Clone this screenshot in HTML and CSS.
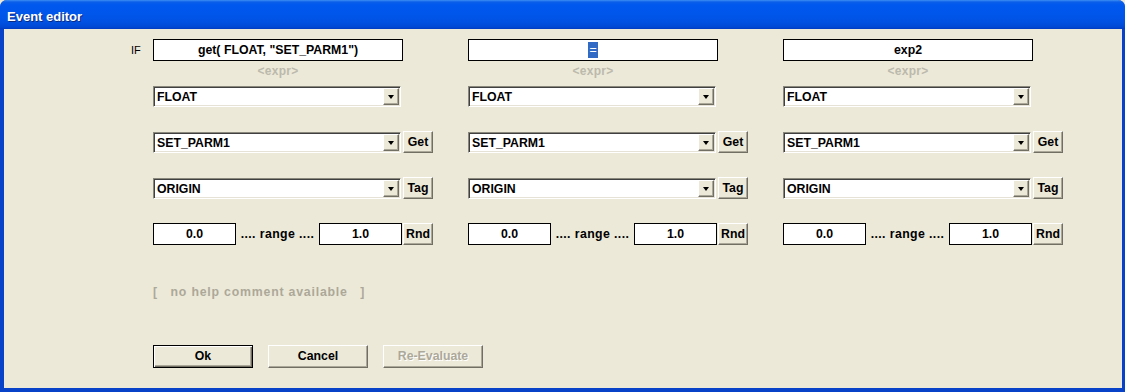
FILE: index.html
```html
<!DOCTYPE html>
<html>
<head>
<meta charset="utf-8">
<link rel="stylesheet" href="styles.css">
</head>
<body>
<div class="window">
  <div class="titlebar"><span class="title">Event editor</span></div>
  <div class="client">
    <div class="grid">
      <div class="gutter"><span class="if">IF</span></div>

      <div class="col">
        <div class="expr">get( FLOAT, "SET_PARM1")</div>
        <div class="hint">&lt;expr&gt;</div>
        <div class="row r1"><div class="combo">FLOAT<span class="arrow"><i></i></span></div></div>
        <div class="row r2"><div class="combo">SET_PARM1<span class="arrow"><i></i></span></div><div class="btn">Get</div></div>
        <div class="row r2"><div class="combo">ORIGIN<span class="arrow"><i></i></span></div><div class="btn">Tag</div></div>
        <div class="row r3"><div class="num">0.0</div><div class="range">.... range ....</div><div class="num">1.0</div><div class="btn rnd">Rnd</div></div>
      </div>

      <div class="col">
        <div class="expr"><span class="sel">=</span></div>
        <div class="hint">&lt;expr&gt;</div>
        <div class="row r1"><div class="combo">FLOAT<span class="arrow"><i></i></span></div></div>
        <div class="row r2"><div class="combo">SET_PARM1<span class="arrow"><i></i></span></div><div class="btn">Get</div></div>
        <div class="row r2"><div class="combo">ORIGIN<span class="arrow"><i></i></span></div><div class="btn">Tag</div></div>
        <div class="row r3"><div class="num">0.0</div><div class="range">.... range ....</div><div class="num">1.0</div><div class="btn rnd">Rnd</div></div>
      </div>

      <div class="col">
        <div class="expr">exp2</div>
        <div class="hint">&lt;expr&gt;</div>
        <div class="row r1"><div class="combo">FLOAT<span class="arrow"><i></i></span></div></div>
        <div class="row r2"><div class="combo">SET_PARM1<span class="arrow"><i></i></span></div><div class="btn">Get</div></div>
        <div class="row r2"><div class="combo">ORIGIN<span class="arrow"><i></i></span></div><div class="btn">Tag</div></div>
        <div class="row r3"><div class="num">0.0</div><div class="range">.... range ....</div><div class="num">1.0</div><div class="btn rnd">Rnd</div></div>
      </div>
    </div>

    <div class="help">[&nbsp;&nbsp; no help comment available &nbsp;&nbsp;]</div>

    <div class="actions">
      <div class="pbtn default">Ok</div>
      <div class="pbtn">Cancel</div>
      <div class="pbtn disabled">Re-Evaluate</div>
    </div>
  </div>
</div>
</body>
</html>
```

FILE: styles.css
```css
* { box-sizing: border-box; }
html, body { margin: 0; padding: 0; }
body {
  width: 1125px;
  height: 392px;
  overflow: hidden;
  background: #ece9d8;
  font-family: "Liberation Sans", Arial, sans-serif;
  font-weight: bold;
  font-size: 12.3px;
  color: #000;
}
.window {
  width: 1125px;
  height: 392px;
  display: flex;
  flex-direction: column;
  background: #0842c8;
  border-radius: 7px 7px 0 0;
  overflow: hidden;
}
.titlebar {
  height: 29px;
  flex: none;
  background: linear-gradient(to bottom, #3d8ff5 0px, #0a5ee8 2px, #0058ee 5px, #0056eb 14px, #0051e2 22px, #0048d4 27px, #003cc0 29px);
  display: flex;
  align-items: center;
  padding-left: 7px;
  padding-top: 3px;
}
.title {
  color: #fff;
  font-family: "Liberation Sans", Arial, sans-serif;
  font-weight: bold;
  font-size: 13px;
  text-shadow: 1px 1px 0 #0a2a80;
}
.client {
  flex: 1;
  margin: 0 3px 4px 4px;
  background: #ece9d8;
  display: flex;
  flex-direction: column;
}
.grid {
  display: grid;
  grid-template-columns: 149px 315px 315px 1fr;
  padding-top: 10px;
}
.gutter { padding-left: 127px; }
.if {
  display: block;
  height: 22px;
  line-height: 22px;
  font-weight: normal;
  font-size: 11px;
  color: #000;
}
.col { display: flex; flex-direction: column; }
.expr {
  width: 250px;
  height: 22px;
  border: 1px solid #000;
  background: #fff;
  text-align: center;
  line-height: 20px;
  white-space: nowrap;
}
.sel {
  background: #316ac5;
  color: #fff;
  padding: 1px 1px;
  font-weight: normal;
}
.hint {
  margin-top: 2px;
  width: 250px;
  height: 16px;
  line-height: 16px;
  text-align: center;
  color: #bcb9ad;
  font-size: 12px;
  letter-spacing: 0.3px;
}
.row { display: flex; align-items: flex-start; }
.r1 { margin-top: 7px; }
.r2 { margin-top: 25px; }
.r3 { margin-top: 24px; }
.combo {
  position: relative;
  width: 248px;
  height: 21px;
  background: #fff;
  border-top: 1px solid #8a887c;
  border-left: 1px solid #8a887c;
  border-right: 1px solid #fff;
  border-bottom: 1px solid #fff;
  box-shadow: inset 1px 1px 0 #404040, inset -1px -1px 0 #e6e3d6;
  padding-left: 3px;
  padding-top: 1px;
  line-height: 19px;
}
.arrow {
  position: absolute;
  right: 1px;
  top: 1px;
  width: 16px;
  height: 17px;
  background: #ece9d8;
  border-top: 1px solid #fff;
  border-left: 1px solid #fff;
  border-right: 1px solid #716f64;
  border-bottom: 1px solid #716f64;
  box-shadow: inset -1px -1px 0 #aca899;
  display: flex;
  align-items: center;
  justify-content: center;
}
.arrow i {
  display: block;
  width: 0;
  height: 0;
  border-left: 3.5px solid transparent;
  border-right: 3.5px solid transparent;
  border-top: 4px solid #000;
  margin-top: 1px;
}
.btn {
  margin-left: 2px;
  margin-top: -1px;
  margin-bottom: 0;
  width: 30px;
  height: 22px;
  background: #ece9d8;
  border-top: 1px solid #fff;
  border-left: 1px solid #fff;
  border-right: 1px solid #716f64;
  border-bottom: 1px solid #716f64;
  box-shadow: inset -1px -1px 0 #aca899;
  text-align: center;
  line-height: 20px;
}
.btn.rnd { margin-left: 1px; margin-top: 0; }
.num {
  width: 83px;
  height: 22px;
  border: 1px solid #000;
  background: #fff;
  text-align: center;
  line-height: 20px;
}
.range {
  width: 83px;
  height: 22px;
  line-height: 22px;
  text-align: center;
  white-space: nowrap;
  letter-spacing: 0.4px;
}
.help {
  margin-top: 39px;
  margin-left: 149px;
  height: 16px;
  line-height: 16px;
  color: #aca899;
  white-space: nowrap;
  letter-spacing: 0.8px;
}
.actions {
  margin-top: 45px;
  margin-left: 149px;
  display: flex;
  gap: 15px;
}
.pbtn {
  width: 100px;
  height: 23px;
  background: #ece9d8;
  border-top: 1px solid #fff;
  border-left: 1px solid #fff;
  border-right: 1px solid #716f64;
  border-bottom: 1px solid #716f64;
  box-shadow: inset -1px -1px 0 #aca899;
  text-align: center;
  line-height: 21px;
}
.pbtn.default {
  border: 1px solid #000;
  box-shadow: inset 1px 1px 0 #fff, inset -1px -1px 0 #716f64, inset -2px -2px 0 #aca899;
}
.pbtn.disabled {
  color: #aca899;
  text-shadow: 1px 1px 0 #fff;
}
```
